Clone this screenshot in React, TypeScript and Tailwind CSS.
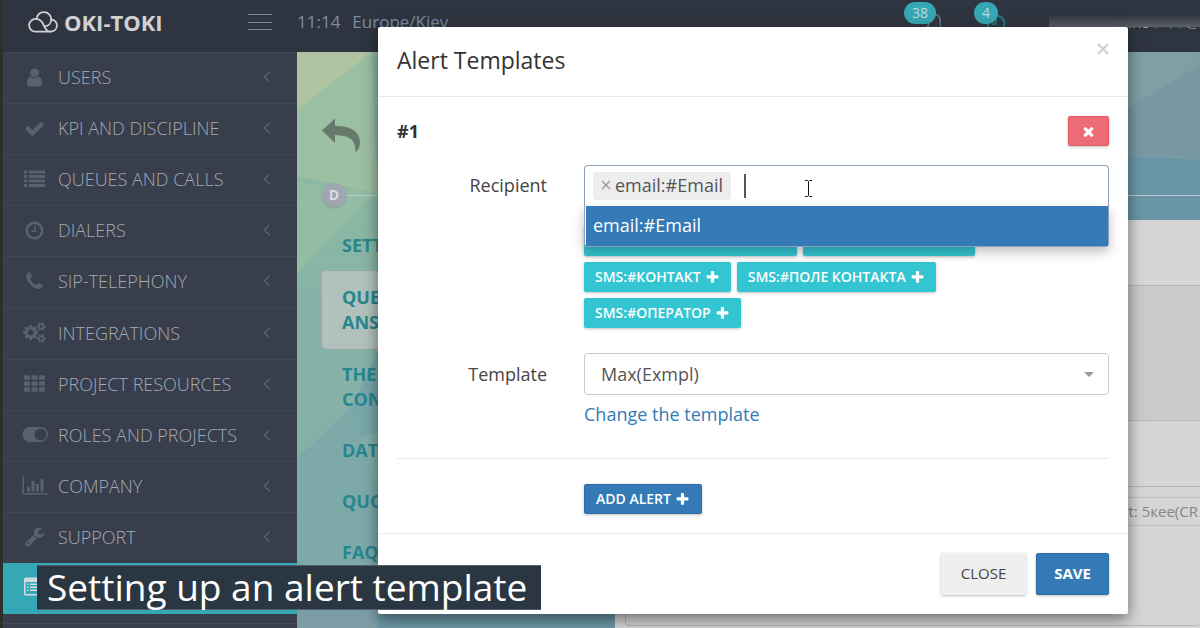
import type { ReactNode } from "react";

const paths = {
  user: "M1536 1399q0 109-62.5 187t-150.5 78h-854q-88 0-150.5-78t-62.5-187q0-85 8.5-160.5t31.5-152 58.5-131 94-89 134.5-34.5q131 128 313 128t313-128q76 0 134.5 34.5t94 89 58.5 131 31.5 152 8.5 160.5zm-256-887q0 159-112.5 271.5t-271.5 112.5-271.5-112.5-112.5-271.5 112.5-271.5 271.5-112.5 271.5 112.5 112.5 271.5z",
  check: "M1671 566q0 40-28 68l-724 724-136 136q-28 28-68 28t-68-28l-136-136-362-362q-28-28-28-68t28-68l136-136q28-28 68-28t68 28l294 295 656-657q28-28 68-28t68 28l136 136q28 28 28 68z",
  list: "M0 128h256v256H0zM384 128h1408v256H384zM0 512h256v256H0zM384 512h1408v256H384zM0 896h256v256H0zM384 896h1408v256H384zM0 1280h256v256H0zM384 1280h1408v256H384z",
  clock: "M1024 544v448q0 14-9 23t-23 9h-320q-14 0-23-9t-9-23v-64q0-14 9-23t23-9h224v-352q0-14 9-23t23-9h64q14 0 23 9t9 23zm416 352q0-148-73-273t-198-198-273-73-273 73-198 198-73 273 73 273 198 198 273 73 273-73 198-198 73-273zm224 0q0 209-103 385.5t-279.5 279.5-385.5 103-385.5-103-279.5-279.5-103-385.5 103-385.5 279.5-279.5 385.5-103 385.5 103 279.5 279.5 103 385.5z",
  phone: "M1600 1240q0 27-10 70.5t-21 68.5q-21 50-122 106-94 51-186 51-27 0-53-3.5t-57.5-12.5-47-14.5-55.5-20.5-49-18q-98-35-175-83-127-79-264-216t-216-264q-48-77-83-175-3-9-18-49t-20.5-55.5-14.5-47-12.5-57.5-3.5-53q0-92 51-186 56-101 106-122 25-11 68.5-21t70.5-10q14 0 21 3 18 6 53 76 11 19 30 54t35 63.5 31 53.5q3 4 17.5 25t21.5 35.5 7 28.5q0 20-28.5 50t-62 55-62 53-28.5 46q0 9 5 22.5t8.5 20.5 14 24 11.5 19q76 137 174 235t235 174q2 1 19 11.5t24 14 20.5 8.5 22.5 5q18 0 46-28.5t53-62 55-62 50-28.5q14 0 28.5 7t35.5 21.5 25 17.5q25 15 53.5 31t63.5 35 54 30q70 35 76 53 3 7 3 21z",
  cogs: "M832 896q0-106-75-181t-181-75-181 75-75 181 75 181 181 75 181-75 75-181zm768 512q0-52-38-90t-90-38-90 38-38 90q0 53 37.5 90.5t90.5 37.5 90.5-37.5 37.5-90.5zm0-1024q0-52-38-90t-90-38-90 38-38 90q0 53 37.5 90.5t90.5 37.5 90.5-37.5 37.5-90.5zm-384 421v185q0 10-7 19.5t-16 10.5l-155 24q-11 35-32 76 34 48 90 115 7 11 7 20 0 12-7 19-23 30-82.5 89.5t-78.5 59.5q-11 0-21-7l-115-90q-37 19-77 31-11 108-23 155-7 24-30 24h-186q-11 0-20-7.5t-10-17.5l-23-153q-34-10-75-31l-118 89q-7 7-20 7-11 0-21-8-144-133-144-160 0-9 7-19 10-14 41-53t47-61q-23-44-35-82l-152-24q-10-1-17-9.5t-7-19.5v-185q0-10 7-19.5t16-10.5l155-24q11-35 32-76-34-48-90-115-7-11-7-20 0-12 7-20 22-30 82-89t79-59q11 0 21 7l115 90q34-18 77-32 11-108 23-154 7-24 30-24h186q11 0 20 7.5t10 17.5l23 153q34 10 75 31l118-89q8-7 20-7 11 0 21 8 144 133 144 160 0 8-7 19-12 16-42 54t-45 60q23 48 34 82l152 23q10 2 17 10.5t7 19.5zm640 533v140q0 16-149 31-12 27-30 52 51 113 51 138 0 4-4 7-122 71-124 71-8 0-46-47t-52-68q-20 2-30 2t-30-2q-14 21-52 68t-46 47q-2 0-124-71-4-3-4-7 0-25 51-138-18-25-30-52-149-15-149-31v-140q0-16 149-31 13-29 30-52-51-113-51-138 0-4 4-7 4-2 35-20t59-34 30-16q8 0 46 46.5t52 67.5q20-2 30-2t30 2q51-71 92-112l6-2q4 0 124 70 4 3 4 7 0 25-51 138 17 23 30 52 149 15 149 31zm0-1024v140q0 16-149 31-12 27-30 52 51 113 51 138 0 4-4 7-122 71-124 71-8 0-46-47t-52-68q-20 2-30 2t-30-2q-14 21-52 68t-46 47q-2 0-124-71-4-3-4-7 0-25 51-138-18-25-30-52-149-15-149-31v-140q0-16 149-31 13-29 30-52-51-113-51-138 0-4 4-7 4-2 35-20t59-34 30-16q8 0 46 46.5t52 67.5q20-2 30-2t30 2q51-71 92-112l6-2q4 0 124 70 4 3 4 7 0 25-51 138 17 23 30 52 149 15 149 31z",
  grid: "M60 192h392q60 0 60 60v264q0 60-60 60H60q-60 0-60-60V252q0-60 60-60zM700 192h392q60 0 60 60v264q0 60-60 60H700q-60 0-60-60V252q0-60 60-60zM1340 192h392q60 0 60 60v264q0 60-60 60h-392q-60 0-60-60V252q0-60 60-60zM60 704h392q60 0 60 60v264q0 60-60 60H60q-60 0-60-60V764q0-60 60-60zM700 704h392q60 0 60 60v264q0 60-60 60H700q-60 0-60-60V764q0-60 60-60zM1340 704h392q60 0 60 60v264q0 60-60 60h-392q-60 0-60-60V764q0-60 60-60zM60 1216h392q60 0 60 60v264q0 60-60 60H60q-60 0-60-60v-264q0-60 60-60zM700 1216h392q60 0 60 60v264q0 60-60 60H700q-60 0-60-60v-264q0-60 60-60zM1340 1216h392q60 0 60 60v264q0 60-60 60h-392q-60 0-60-60v-264q0-60 60-60z",
  toggle: "M512 256h896a640 640 0 0 1 0 1280H512a640 640 0 0 1 0-1280zM1408 384a512 512 0 1 0 0 1024 512 512 0 0 0 0-1024z",
  chart: "M-128 128h128v1408h2048v128H-128zM256 1024h256v384H256zM640 512h256v896H640zM1024 768h256v640h-256zM1408 320h256v1088h-256z",
  wrench: "M448 1472q0-26-19-45t-45-19-45 19-19 45 19 45 45 19 45-19 19-45zm644-420l-682 682q-37 37-90 37-52 0-91-37l-106-108q-38-36-38-90 0-53 38-91l681-681q39 98 114.5 173.5t173.5 114.5zm634-435q0 39-23 106-47 134-164.5 217.5t-258.5 83.5q-185 0-316.5-131.5t-131.5-316.5 131.5-316.5 316.5-131.5q58 0 121.5 16.5t107.5 46.5q16 11 16 28t-16 28l-293 169v224l193 107q5-3 79-48.5t135.5-81 70.5-35.5q15 0 23.5 10t8.5 25z",
  table: "M160 128h1472q160 0 160 160v1216q0 160-160 160H160q-160 0-160-160V288q0-160 160-160zM128 512v992q0 32 32 32h1472q32 0 32-32V512zM256 640h128v128H256zM512 640h1024v128H512zM256 896h128v128H256zM512 896h1024v128H512zM256 1152h128v128H256zM512 1152h1024v128H512z",
  plus: "M1600 736v192q0 40-28 68t-68 28h-416v416q0 40-28 68t-68 28h-192q-40 0-68-28t-28-68v-416h-416q-40 0-68-28t-28-68v-192q0-40 28-68t68-28h416v-416q0-40 28-68t68-28h192q40 0 68 28t28 68v416h416q40 0 68 28t28 68z",
  times: "M1490 1322q0 40-28 68l-136 136q-28 28-68 28t-68-28l-294-294-294 294q-28 28-68 28t-68-28l-136-136q-28-28-28-68t28-68l294-294-294-294q-28-28-28-68t28-68l136-136q28-28 68-28t68 28l294 294 294-294q28-28 68-28t68 28l136 136q28 28 28 68t-28 68l-294 294 294 294q28 28 28 68z",
};

type IconName = keyof typeof paths;

function Icon({ name, className }: { name: IconName; className: string }) {
  return (
    <svg viewBox="0 0 1792 1792" className={className} fill="currentColor" fillRule="evenodd" overflow="visible" aria-hidden="true">
      <path d={paths[name]} />
    </svg>
  );
}

const menu: { icon: IconName; label: string }[] = [
  { icon: "user", label: "USERS" },
  { icon: "check", label: "KPI AND DISCIPLINE" },
  { icon: "list", label: "QUEUES AND CALLS" },
  { icon: "clock", label: "DIALERS" },
  { icon: "phone", label: "SIP-TELEPHONY" },
  { icon: "cogs", label: "INTEGRATIONS" },
  { icon: "grid", label: "PROJECT RESOURCES" },
  { icon: "toggle", label: "ROLES AND PROJECTS" },
  { icon: "chart", label: "COMPANY" },
  { icon: "wrench", label: "SUPPORT" },
];

function Sidebar() {
  return (
    <nav className="flex w-[297px] shrink-0 flex-col border-l-3 border-[#2f302e] bg-[#383e4b]">
      <ul className="flex flex-1 flex-col">
        {menu.map((item) => (
          <li key={item.label} className="flex flex-1 border-t border-[#404654]">
            <a href="#" className="flex flex-1 items-center pr-6 pb-0.5 pl-5 text-lg font-light text-[#a3a9b5]">
              <span className="flex w-[35px] pl-px">
                <Icon name={item.icon} className="size-[21px] text-[#58616e]" />
              </span>
              <span className="flex-1">{item.label}</span>
              <svg viewBox="0 0 8 14" className="h-3 w-3 text-[#5d6674]" fill="none" stroke="currentColor" strokeWidth="1.4" aria-hidden="true">
                <path d="M7 1 1 7l6 6" />
              </svg>
            </a>
          </li>
        ))}
        <li className="flex flex-1 border-t border-[#36a7b4] bg-[#36a7b4] text-[#d3dcdf]">
          <span className="flex flex-1 items-center pb-1 pl-[21px]">
            <Icon name="table" className="size-[21px]" />
          </span>
        </li>
      </ul>
      <div className="mb-1 h-2.5 border-b border-[#444a59]" />
    </nav>
  );
}

function Badge({ children }: { children: ReactNode }) {
  return (
    <span className="absolute top-0 left-0 flex h-[22px] items-center rounded-full bg-[#36a7b4] px-2 text-sm text-[#c3d8dc]">
      {children}
    </span>
  );
}

function TopBar() {
  return (
    <header className="flex h-13 shrink-0 border-l-3 border-[#2f302e] bg-[#2f3540]">
      <div className="flex w-[294px] items-center pr-[25px] pb-2 pl-[25px]">
        <svg viewBox="0 0 30 22" className="h-[22px] w-[30px]" fill="none" stroke="#cfd1d3" strokeWidth="1.800" strokeLinecap="round" aria-hidden="true">
          <path d="M22.500 20.700H7.500a6.400 6.400 0 0 1 0-12.800c4.500 0 6.800 2.600 8.200 6.300 1.300 3.400 3 6.200 6.800 6.500" />
          <path d="M8.600 7.500C9.500 3.500 12.300 1.200 16 1.200c4.100 0 7.300 3.200 7.300 7.200 0 3.600-2.700 6.400-6.600 7" />
          <path d="M23.200 8.500c3.400.3 5.700 2.900 5.700 6.100 0 3.500-2.700 6.100-6.400 6.100" />
        </svg>
        <span className="ml-1.5 flex-1 text-[22px] leading-7 font-bold text-[#cfd1d3]">OKI-TOKI</span>
        <button aria-label="Toggle menu" className="flex h-4 w-6 flex-col justify-between text-[#7b8793]">
          <span className="h-px w-full bg-current" />
          <span className="h-px w-full bg-current" />
          <span className="h-px w-full bg-current" />
        </button>
      </div>
      <div className="flex flex-1 gap-3 pt-2 text-[17px] leading-7 text-[#7b8ca1]">
        <span>11:14</span>
        <span>Europe/Kiev</span>
      </div>
      <div className="relative mt-0.5 mr-[33px] w-[37px]">
        <svg viewBox="0 0 37 36" className="h-9 w-[37px]" fill="none" stroke="#6c7584" strokeWidth="1.600" aria-hidden="true">
          <path d="M23 25.500c2-2 2-4 2-7 0-4 2-6 5.500-6s5.500 2 5.500 6c0 3 0 5 2 7z" />
        </svg>
        <Badge>38</Badge>
      </div>
      <div className="relative mt-0.5 mr-[43px] w-8">
        <svg viewBox="0 0 32 36" className="h-9 w-8" fill="none" stroke="#23727e" strokeWidth="2.500" aria-hidden="true">
          <circle cx="22" cy="22" r="8.500" />
          <path d="M22 17v5h-4" strokeWidth="2" />
        </svg>
        <Badge>4</Badge>
      </div>
      <div className="relative flex w-[151px] justify-end pt-2">
        <span className="text-[17px] leading-7 font-light whitespace-nowrap text-[#a8adb5]">enko1-11@</span>
        <span className="absolute inset-x-0 top-4 h-[11px] bg-linear-to-b from-[#343a46] to-[#5c6069]" />
      </div>
    </header>
  );
}

const tabs = [["SETT"], ["QUE", "ANS"], ["THE", "CON"], ["DATA"], ["QUO"], ["FAQ"]];

function Workspace() {
  return (
    <main className="relative flex flex-1 flex-col overflow-hidden">
      <svg viewBox="0 0 903 576" preserveAspectRatio="none" className="absolute inset-0 size-full" aria-hidden="true">
        <defs>
          <linearGradient id="base" x1="0" y1="0" x2="1" y2="0">
            <stop offset="0" stopColor="#9bc0a2" />
            <stop offset="0.120" stopColor="#9cbfa4" />
            <stop offset="0.900" stopColor="#82a1a5" />
            <stop offset="1" stopColor="#7e9ea3" />
          </linearGradient>
          <linearGradient id="fade" x1="0" y1="0" x2="0" y2="1">
            <stop offset="0" stopColor="#8bb9a4" />
            <stop offset="1" stopColor="#7faaa8" />
          </linearGradient>
        </defs>
        <rect width="903" height="576" fill="url(#base)" />
        <path d="M0 0h75L0 58z" fill="#b0c4a1" />
        <path d="M75 5 81 0v140l-3-50z" fill="#8eb8a5" />
        <path d="M0 124 81 142v434H0z" fill="url(#fade)" />
        <path d="M0 130V221L69 148 81 142z" fill="#92bca4" />
        <path d="M0 232 81 250v86L55 355 0 366z" fill="#86b2a9" />
        <path d="M54 355 81 300v80L0 407z" fill="#79a7aa" />
        <path d="M0 366 54 355 0 407z" fill="#83b1a5" />
        <path d="M0 407 54 355 81 440V544L0 510z" fill="#7ea9a9" />
        <path d="M0 510 81 544v32H0z" fill="#7d9da6" />
        <path d="M81 550H320v26H81z" fill="#6d99a8" />
        <path d="M903 12 831 56V104L903 106z" fill="#7899a4" />
        <path d="M700 100 903 107v61H700z" fill="#6b96a7" />
      </svg>
      <div className="relative flex h-[168px] shrink-0 flex-col pl-[25px]">
        <svg viewBox="0 0 39 35" className="mt-[66px] h-[35px] w-[39px] text-[#66796b]" fill="currentColor" aria-hidden="true">
          <path d="M0 12.500 13 .500V8C28 8 38.500 13 38 25.500 37.800 29.500 36 32.500 33.500 34.500 33.500 24 31 17.500 13 17v8z" />
        </svg>
        <div className="mt-[30px] flex items-center">
          <span className="flex size-6 items-center justify-center rounded-full bg-[#9fa6b1] text-sm font-bold text-[#d8dbe0] shadow">D</span>
          <span className="h-px flex-1 bg-[#bccdd2]" />
        </div>
      </div>
      <div className="relative flex flex-1">
        <ul className="w-[318px] pl-[25px] text-lg font-bold text-[#28868e]">
          {tabs.map((lines, i) => (
            <li
              key={lines[0]}
              className={
                i === 1
                  ? "rounded-sm border border-[#bdb9bb] bg-[#b1c2bc] px-[19px] py-[13px] leading-[25px]"
                  : "px-5 py-[13px] leading-[25px]"
              }
            >
              {lines.map((line) => (
                <span key={line} className="block">{line}</span>
              ))}
            </li>
          ))}
        </ul>
        <div className="flex flex-1 flex-col bg-[#d6d6d6] pl-2.5">
          <div className="h-[65px]" />
          <div className="h-[136px] border-y border-[#b5b5b5] bg-[#cbcbcb]" />
          <div className="h-[66px] border-b border-[#b5b5b5]" />
          <div className="mt-2.5 flex h-[29px] items-center justify-end overflow-hidden border-y border-[#bfbfbf] pr-0.5 text-[15px] whitespace-nowrap text-[#858585]">
            List: 5кее(CR
          </div>
          <div className="h-[100px] rounded-b border-b border-l border-[#b5b5b5]" />
        </div>
      </div>
    </main>
  );
}

function TagButton({ children }: { children: ReactNode }) {
  return (
    <button className="flex h-[30px] items-center gap-1 rounded-xs bg-[#33c5d2] px-[11px] text-sm font-semibold text-white shadow-[0_1px_3px_rgba(0,0,0,0.25)]">
      {children}
      <Icon name="plus" className="size-[15px]" />
    </button>
  );
}

function AlertDialog() {
  return (
    <div role="dialog" aria-labelledby="dialog-title" className="absolute top-[27px] left-[378px] w-[750px] rounded-xs bg-white text-lg text-[#444] shadow-[0_5px_15px_rgba(0,0,0,0.5)]">
      <div className="flex h-[70px] items-start justify-between border-b border-[#e9e9e9] px-[19px] pt-4">
        <h1 id="dialog-title" className="text-[23px] leading-[34px] text-[#333]">Alert Templates</h1>
        <button aria-label="Close dialog" className="text-[#cfcfcf]">
          <svg viewBox="0 0 12 12" className="size-3" stroke="currentColor" strokeWidth="2" aria-hidden="true">
            <path d="m1 1 10 10M11 1 1 11" />
          </svg>
        </button>
      </div>
      <div className="px-[19px] pt-[19px]">
        <div className="flex items-center justify-between">
          <strong className="text-[#333]">#1</strong>
          <button aria-label="Remove alert" className="flex h-[30px] w-[41px] items-center justify-center rounded-xs border border-[#e95965] bg-[#ed6b75] text-white shadow-[0_1px_3px_rgba(0,0,0,0.25)]">
            <Icon name="times" className="size-[15px]" />
          </button>
        </div>
        <div className="mt-[19px] grid grid-cols-[150px_1fr] gap-x-[37px]">
          <label htmlFor="recipient" className="pt-1.5 text-right leading-7">Recipient</label>
          <div>
            <div className="relative">
              <div className="flex h-[42px] items-center rounded-t border border-b-0 border-[#8f9fbf] bg-white px-2 pb-0.5">
                <span className="flex h-7 items-center gap-1 rounded bg-[#ededed] px-2 pb-px leading-[26px] text-[#555]">
                  <button aria-label="Remove recipient" className="text-[#999]">
                    <svg viewBox="0 0 10 10" className="size-2.5" stroke="currentColor" strokeWidth="1.400" aria-hidden="true">
                      <path d="m1 1 8 8M9 1 1 9" />
                    </svg>
                  </button>
                  email:#Email
                </span>
                <span className="ml-[13px] h-6 w-0.5 bg-[#555]" />
                <input id="recipient" className="h-7 min-w-0 flex-1 outline-none" />
              </div>
              <ul role="listbox" aria-label="Recipients" className="absolute inset-x-0 top-[41px] z-10 rounded-b border border-t-0 border-[#8f9fbf] bg-white pl-px shadow-[0_5px_12px_rgba(0,0,0,0.25)]">
                <li role="option" aria-selected="true" className="h-10 bg-[#337ab7] px-[7px] leading-[38px] text-white">email:#Email</li>
              </ul>
              <svg viewBox="0 0 9 17" className="absolute top-[15px] left-[220px] h-[17px] w-[9px]" fill="none" stroke="#111" strokeWidth="1" aria-hidden="true">
                <path d="M1 .5h2.500l1 1 1-1H8M4.500 1.500v14M1 16.500h2.500l1-1 1 1H8" />
              </svg>
            </div>
            <div className="mt-[19px] flex max-w-[400px] flex-wrap gap-1.5">
              <button aria-label="Add email recipient" className="h-[30px] w-[213px] rounded-xs bg-[#33c5d2] shadow-[0_1px_3px_rgba(0,0,0,0.25)]" />
              <button aria-label="Add operator recipient" className="h-[30px] w-[172px] rounded-xs bg-[#33c5d2] shadow-[0_1px_3px_rgba(0,0,0,0.25)]" />
              <TagButton>SMS:#КОНТАКТ</TagButton>
              <TagButton>SMS:#ПОЛЕ КОНТАКТА</TagButton>
              <TagButton>SMS:#ОПЕРАТОР</TagButton>
            </div>
          </div>
          <label htmlFor="template" className="mt-[25px] pt-[7px] text-right leading-7">Template</label>
          <div className="mt-[25px]">
            <div className="relative">
              <select id="template" className="h-[42px] w-full appearance-none rounded border border-[#c2cad8] bg-white px-4 text-[#555]">
                <option>Max(Exmpl)</option>
              </select>
              <svg viewBox="0 0 10 5" className="pointer-events-none absolute top-[19px] right-[15px] h-[5px] w-2.5 text-[#999]" fill="currentColor" aria-hidden="true">
                <path d="M0 0h10L5 5z" />
              </svg>
            </div>
            <a href="#" className="mt-[5px] block text-[#337ab7]">Change the template</a>
          </div>
        </div>
        <hr className="mt-[30px] border-[#eaeaea]" />
        <button className="mt-[25px] mb-[19px] ml-[187px] flex h-[30px] items-center gap-1 rounded-xs border border-[#2e6da4] bg-[#337ab7] px-[11px] text-sm font-semibold text-white shadow-[0_1px_3px_rgba(0,0,0,0.25)]">
          ADD ALERT
          <Icon name="plus" className="size-[15px]" />
        </button>
      </div>
      <div className="flex justify-end gap-2.5 border-t border-[#e9e9e9] p-[19px]">
        <button className="h-[42px] rounded-xs bg-[#efefef] px-5 text-[15px] font-medium text-[#444] shadow-[0_1px_3px_rgba(0,0,0,0.25)]">CLOSE</button>
        <button className="h-[42px] rounded-xs border border-[#2e6da4] bg-[#337ab7] px-[17px] text-[15px] font-bold text-white shadow-[0_1px_3px_rgba(0,0,0,0.25)]">SAVE</button>
      </div>
    </div>
  );
}

export default function App() {
  return (
    <div className="relative flex h-screen flex-col overflow-hidden bg-[#d6d6d6] font-['Open_Sans',sans-serif]">
      <TopBar />
      <div className="flex min-h-0 flex-1">
        <Sidebar />
        <Workspace />
      </div>
      <AlertDialog />
      <p className="absolute bottom-[18px] left-[37px] border-y border-[#52606a] bg-[#2a3743] pr-3.5 pb-0.5 pl-2.5 text-[37px] leading-[41px] text-white">
        Setting up an alert template
      </p>
    </div>
  );
}
